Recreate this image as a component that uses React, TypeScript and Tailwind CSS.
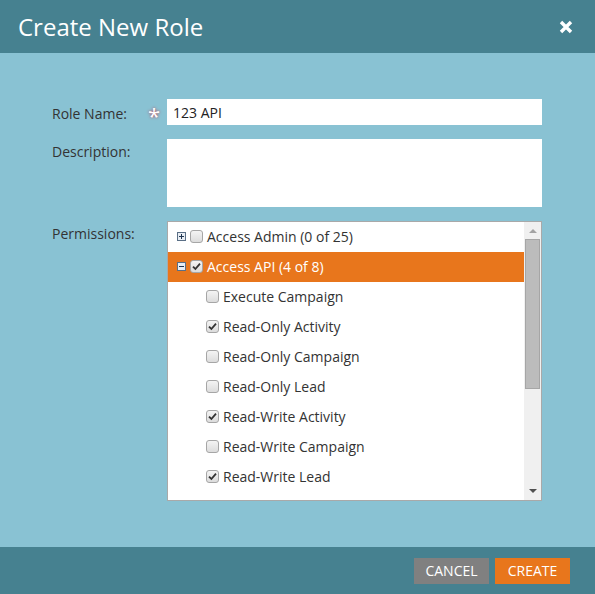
import { useState } from 'react';

const children = [
  { label: 'Execute Campaign', checked: false },
  { label: 'Read-Only Activity', checked: true },
  { label: 'Read-Only Campaign', checked: false },
  { label: 'Read-Only Lead', checked: false },
  { label: 'Read-Write Activity', checked: true },
  { label: 'Read-Write Campaign', checked: false },
  { label: 'Read-Write Lead', checked: true },
];

function Check({ checked }: { checked: boolean }) {
  return (
    <span className="flex h-[13px] w-[13px] shrink-0 items-center justify-center rounded-[3px] border border-[#a6a6a6] bg-gradient-to-b from-[#f4f4f4] to-[#dcdcdc]">
      {checked && (
        <svg width="9" height="9" viewBox="0 0 9 9">
          <path d="M1 4.6 L3.4 7 L8 1.6" fill="none" stroke="#333" strokeWidth="1.8" />
        </svg>
      )}
    </span>
  );
}

function Expander({ open }: { open: boolean }) {
  return (
    <span className="flex h-[9px] w-[9px] shrink-0 items-center justify-center border border-[#5a6f86] bg-[#e8edf3]">
      <svg width="7" height="7" viewBox="0 0 7 7">
        <path d="M1 3.5 H6" stroke="#1f3550" strokeWidth="1" />
        {!open && <path d="M3.5 1 V6" stroke="#1f3550" strokeWidth="1" />}
      </svg>
    </span>
  );
}

export default function App() {
  const [name, setName] = useState('123 API');

  return (
    <div className="flex h-[594px] w-[595px] flex-col bg-[#89c2d3] font-['Open_Sans',sans-serif] text-[14px] text-[#333]">
      <div className="flex h-[53px] shrink-0 items-center justify-between bg-[#468190] pl-[18px] pr-[22px]">
        <h1 className="text-[24px] text-white">Create New Role</h1>
        <svg width="14" height="14" viewBox="0 0 14 14">
          <path d="M2 2 L12 12 M12 2 L2 12" stroke="white" strokeWidth="3.4" />
        </svg>
      </div>

      <div className="flex-1 pl-[52px] pt-[46px]">
        <div className="flex items-start">
          <label className="w-[96px] pt-[4px]">Role Name:</label>
          <span className="w-[19px] pt-[6px] text-[22px] leading-[20px] text-white [text-shadow:0_0_3px_#c0394b]">*</span>
          <input
            value={name}
            onChange={(e) => setName(e.target.value)}
            className="h-[26px] w-[375px] bg-white px-[6px] text-[14px] text-[#222] outline-none"
          />
        </div>

        <div className="mt-[14px] flex items-start">
          <label className="w-[115px] pt-[2px]">Description:</label>
          <textarea className="h-[68px] w-[375px] resize-none bg-white outline-none" />
        </div>

        <div className="mt-[14px] flex items-start">
          <label className="w-[115px] pt-[2px]">Permissions:</label>
          <div className="flex h-[280px] w-[375px] border border-[#a9a9a9] bg-white">
            <div className="flex-1 overflow-hidden">
              <div className="flex h-[30px] items-center gap-[4px] pb-[2px] pl-[9px]">
                <Expander open={false} />
                <Check checked={false} />
                <span>Access Admin (0 of 25)</span>
              </div>
              <div className="flex h-[30px] items-center gap-[4px] bg-[#e8761c] pb-[2px] pl-[9px] text-white">
                <Expander open />
                <Check checked />
                <span>Access API (4 of 8)</span>
              </div>
              {children.map((c) => (
                <div key={c.label} className="flex h-[30px] items-center gap-[4px] pb-[2px] pl-[38px]">
                  <Check checked={c.checked} />
                  <span>{c.label}</span>
                </div>
              ))}
            </div>
            <div className="flex w-[17px] flex-col items-center bg-[#f0f0f0]">
              <div className="flex h-[17px] items-center justify-center">
                <svg width="8" height="5" viewBox="0 0 8 5">
                  <path d="M0 5 L4 1 L8 5 Z" fill="#a3a3a3" />
                </svg>
              </div>
              <div className="h-[150px] w-[15px] border border-[#a6a6a6] bg-[#bcbcbc]" />
              <div className="flex-1" />
              <div className="flex h-[17px] items-center justify-center">
                <svg width="8" height="5" viewBox="0 0 8 5">
                  <path d="M0 0 L4 4 L8 0 Z" fill="#505050" />
                </svg>
              </div>
            </div>
          </div>
        </div>
      </div>

      <div className="flex h-[47px] shrink-0 items-center justify-end gap-[6px] bg-[#468190] pr-[25px]">
        <button className="h-[26px] w-[75px] bg-[#808080] text-[14px] text-white">CANCEL</button>
        <button className="h-[26px] w-[75px] bg-[#e8761c] text-[14px] text-white">CREATE</button>
      </div>
    </div>
  );
}
